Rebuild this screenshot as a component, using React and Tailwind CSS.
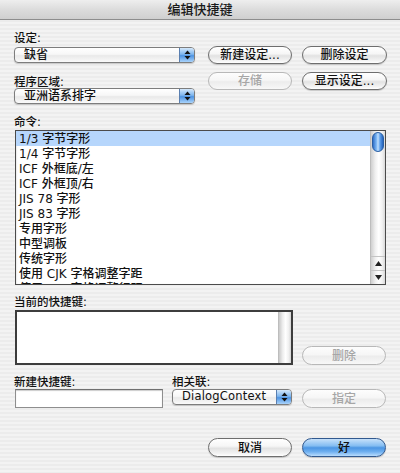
import React from "react";

const FONT = { fontFamily: '"DejaVu Sans", "Noto Sans CJK SC", sans-serif' };

function Arrows() {
  return (
    <svg width="7" height="10" viewBox="0 0 7 10">
      <path d="M3.5 0.5 L6.5 4 L0.5 4 Z" fill="#111" />
      <path d="M3.5 9.5 L6.5 6 L0.5 6 Z" fill="#111" />
    </svg>
  );
}

function Popup({ className, children }) {
  return (
    <div
      className={
        "flex h-[16px] rounded-[4px] border border-[#7d7d7d] bg-[linear-gradient(#ffffff,#f7f7f7_45%,#e9e9e9_55%,#fafafa)] shadow-[0_1px_1px_rgba(0,0,0,0.18)] " +
        className
      }
    >
      <div className="flex flex-1 items-center pl-[9px] text-[12px] font-medium leading-none text-[#111]">{children}</div>
      <div className="flex w-[15px] items-center justify-center rounded-r-[3px] border-l border-[#5a7fb0] bg-[linear-gradient(#d4e8fb,#7db5ee_45%,#4d93e2_55%,#a9d3fb)]">
        <Arrows />
      </div>
    </div>
  );
}

function Button({ className, disabled, primary, children }) {
  const base =
    "flex h-[18px] items-center justify-center rounded-full text-[12px] font-medium leading-none shadow-[0_1px_1px_rgba(0,0,0,0.18)] ";
  let look;
  if (primary) {
    look =
      "border border-[#31598f] text-[#111] bg-[linear-gradient(#c7e1fa,#84bdf2_40%,#4b95e3_52%,#6fb0f0_75%,#b9dcfd)]";
  } else if (disabled) {
    look =
      "border border-[#b8b8b8] text-[#a6a6a6] bg-[linear-gradient(#fdfdfd,#f6f6f6_45%,#ececec_55%,#f8f8f8)] shadow-none";
  } else {
    look =
      "border border-[#6e6e6e] text-[#111] bg-[linear-gradient(#ffffff,#f6f6f6_42%,#e2e2e2_55%,#f3f3f3_85%,#ffffff)]";
  }
  return <div className={base + look + " " + className}>{children}</div>;
}

function Label({ className, children }) {
  return (
    <div className={"h-[14px] text-[11.5px] font-medium leading-[16px] text-[#111] " + (className || "")}>
      {children}
    </div>
  );
}

const items = [
  "1/3 字节字形",
  "1/4 字节字形",
  "ICF 外框底/左",
  "ICF 外框顶/右",
  "JIS 78 字形",
  "JIS 83 字形",
  "专用字形",
  "中型调板",
  "传统字形",
  "使用 CJK 字格调整字距",
  "使用 CJK 字格调整行距",
];

function ScrollTrack({ className }) {
  return (
    <div
      className={
        "bg-[linear-gradient(to_right,#c9c9c9,#ededed_30%,#ffffff_55%,#f0f0f0_80%,#d6d6d6)] border-l border-[#bdbdbd] " +
        (className || "")
      }
    />
  );
}

export default function App() {
  return (
    <div
      className="w-[400px] h-[473px] overflow-hidden bg-[repeating-linear-gradient(180deg,#ececec_0px,#ececec_2px,#f3f3f3_2px,#f3f3f3_4px)] text-[#111]"
      style={FONT}
    >
      {/* Title bar */}
      <div className="flex h-[20px] items-center justify-center border-b border-[#8d8d8d] bg-[linear-gradient(#eeeeee,#dcdcdc_50%,#cfcfcf)] text-[13px] font-medium leading-none text-[#1a1a1a]">
        编辑快捷键
      </div>

      <div className="pl-[14px] pr-[13px]">
        {/* Top section */}
        <div className="flex">
          <div className="flex w-[182px] flex-col pt-[10px]">
            <Label>设定:</Label>
            <Popup className="mt-[3px] w-[181px]">缺省</Popup>
            <Label className="mt-[11px]">程序区域:</Label>
            <Popup className="mt-0 w-[181px]">亚洲语系排字</Popup>
          </div>
          <div className="ml-[12px] flex flex-col pt-[26px]">
            <div className="flex gap-[10px]">
              <Button className="w-[84px]">新建设定...</Button>
              <Button className="w-[85px]">删除设定</Button>
            </div>
            <div className="mt-[8px] flex gap-[10px]">
              <Button className="w-[84px]" disabled>
                存储
              </Button>
              <Button className="w-[85px]">显示设定...</Button>
            </div>
          </div>
        </div>

        {/* Commands */}
        <Label className="mt-[10px]">命令:</Label>
        <div className="ml-px mt-[2px] flex h-[155px] w-[371px] overflow-hidden border border-[#4b4b4b] bg-white shadow-[inset_0_1px_2px_rgba(0,0,0,0.25)]">
          <div className="flex-1 overflow-hidden">
            {items.map((t, i) => (
              <div
                key={t}
                className={
                  "flex h-[15px] items-center pl-[3px] text-[12px] font-medium leading-none " +
                  (i === 0 ? "bg-[#b6d6fc]" : "")
                }
              >
                {t}
              </div>
            ))}
          </div>
          <div className="flex w-[15px] flex-col border-l border-[#bdbdbd] bg-[linear-gradient(to_right,#cfcfcf,#efefef_30%,#ffffff_55%,#f1f1f1_80%,#d9d9d9)]">
            <div className="flex flex-1 flex-col">
              <div className="mx-auto mt-px h-[20px] w-[12px] rounded-full border border-[#2a5fa3] bg-[linear-gradient(to_right,#2f6fc8,#7fb8f4_35%,#c2e0fc_50%,#5e9fea_70%,#2563bd)]" />
            </div>
            <div className="flex h-[14px] items-center justify-center border-t border-[#c4c4c4]">
              <svg width="7" height="5" viewBox="0 0 7 5">
                <path d="M3.5 0 L7 5 L0 5 Z" fill="#222" />
              </svg>
            </div>
            <div className="flex h-[14px] items-center justify-center border-t border-[#c4c4c4]">
              <svg width="7" height="5" viewBox="0 0 7 5">
                <path d="M3.5 5 L7 0 L0 0 Z" fill="#222" />
              </svg>
            </div>
          </div>
        </div>

        {/* Current shortcuts */}
        <Label className="mt-[9px]">当前的快捷键:</Label>
        <div className="mt-[2px] flex items-end">
          <div className="ml-px flex h-[55px] w-[278px] border-2 border-[#3d3d3d] bg-white">
            <div className="flex-1" />
            <ScrollTrack className="w-[13px]" />
          </div>
          <Button className="ml-[9px] h-[19px] w-[84px]" disabled>
            删除
          </Button>
        </div>

        {/* New shortcut row */}
        <div className="mt-[9px] flex">
          <div className="flex w-[158px] flex-col">
            <Label>新建快捷键:</Label>
            <div className="ml-px mt-px h-[19px] w-[148px] border border-[#8e8e8e] border-t-[#6f6f6f] bg-white shadow-[inset_0_1px_1px_rgba(0,0,0,0.2)]" />
          </div>
          <div className="flex w-[130px] flex-col">
            <Label>相关联:</Label>
            <Popup className="mt-px w-[120px]">
              <span className="text-[11.5px] tracking-[0.2px]">DialogContext</span>
            </Popup>
          </div>
          <div className="flex flex-col pt-[15px]">
            <Button className="w-[84px] h-[19px]" disabled>
              指定
            </Button>
          </div>
        </div>

        {/* Bottom buttons */}
        <div className="mt-[30px] flex gap-[10px] pl-[194px]">
          <Button className="w-[84px] h-[19px]">取消</Button>
          <Button className="w-[84px] h-[19px]" primary>
            好
          </Button>
        </div>
      </div>
    </div>
  );
}
